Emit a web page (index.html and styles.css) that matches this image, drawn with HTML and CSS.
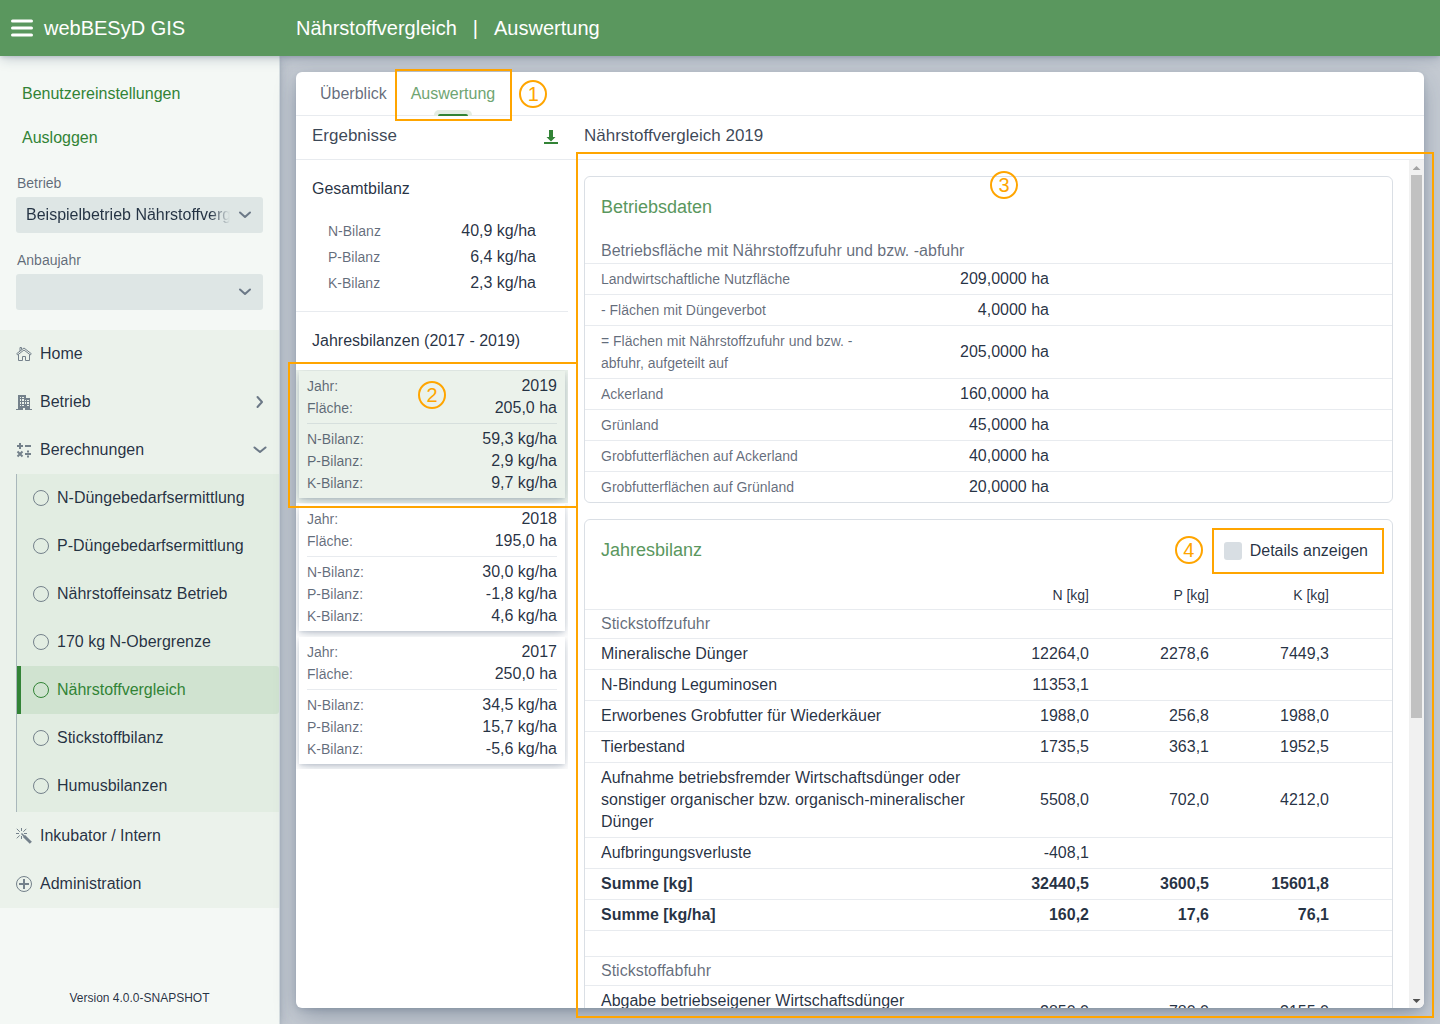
FILE: index.html
```html
<!DOCTYPE html>
<html lang="de">
<head>
    <meta charset="UTF-8">
    <meta name="viewport" content="width=device-width, initial-scale=1.0">
    <title>webBESyD GIS</title>
    <link rel="stylesheet" href="styles.css">
</head>
<body>

    <header class="navbar">
        <div class="brand">
            <button class="menu-toggle" aria-label="Menü">
                <svg width="22" height="18" viewBox="0 0 22 18"><path d="M1.500 2h19M1.500 9h19M1.500 16h19" stroke="#fff" stroke-width="3" stroke-linecap="round"/></svg>
            </button>
            <span>webBESyD GIS</span>
        </div>
        <h1 class="view-title"><span>Nährstoffvergleich</span><span>|</span><span>Auswertung</span></h1>
    </header>

    <div class="app">
        <aside class="drawer">
            <div class="user-links">
                <a href="#">Benutzereinstellungen</a>
                <a href="#">Ausloggen</a>
            </div>

            <div class="field">
                <label for="betrieb">Betrieb</label>
                <div class="select-box">
                    <select id="betrieb">
                        <option>Beispielbetrieb Nährstoffvergleich</option>
                    </select>
                    <svg class="chevron" width="14" height="8" viewBox="0 0 14 8"><path d="M2 1.5l5 4.5 5-4.5"/></svg>
                </div>
            </div>
            <div class="field">
                <label for="anbaujahr">Anbaujahr</label>
                <div class="select-box">
                    <select id="anbaujahr">
                        <option></option>
                    </select>
                    <svg class="chevron" width="14" height="8" viewBox="0 0 14 8"><path d="M2 1.5l5 4.5 5-4.5"/></svg>
                </div>
            </div>

            <nav class="menu">
                <a href="#" class="menu-item">
                    <svg class="icon" viewBox="0 0 16 16"><g fill="none" stroke="currentColor"><path d="M.7 7.7L8 2l7.300 5.700-1 1.200L8 4 1.700 8.900zM4 5V1.500h1.500V3.500M2.500 8.500v6h4v-4h3v4h4v-6"/></g></svg>
                    Home
                </a>
                <a href="#" class="menu-item">
                    <svg class="icon" viewBox="0 0 16 16"><path fill="currentColor" fill-rule="evenodd" d="M0 15h2V1h8v3h4v11h2v1H9v-2H7v2H0zM4 3v1h1V3zM6 3v1h2V3zM9 3v1h0V3zM4 5v2h1V5zM6 5v2h2V5zM9 6v1h1V6zM11 6v1h2V6zM4 8v2h1V8zM6 8v2h2V8zM9 8v2h1V8zM11 8v2h2V8zM4 11v1h1v-1zM6 11v1h2v-1zM11 11v1h2v-1z"/></svg>
                    Betrieb
                    <svg class="chevron" width="8" height="14" viewBox="0 0 8 14"><path d="M1.500 2L6 7l-4.500 5"/></svg>
                </a>
                <a href="#" class="menu-item">
                    <svg class="icon" viewBox="0 0 16 16"><g fill="none" stroke="currentColor" stroke-width="2"><path d="M1 4h6M4 1v6M9 4h6M1.500 9.500l5 5M6.500 9.500l-5 5M9 12h6"/></g><path fill="currentColor" d="M11 8.500h2v2h-2zM11 13.500h2v2h-2z"/></svg>
                    Berechnungen
                    <svg class="chevron" width="14" height="8" viewBox="0 0 14 8"><path d="M1.500 1.500L7 6l5.500-4.500"/></svg>
                </a>
                <div class="submenu">
                    <a href="#" class="menu-item"><svg class="icon" viewBox="0 0 16 16"><circle cx="8" cy="8" r="7.500" fill="none" stroke="currentColor"/></svg>N-Düngebedarfsermittlung</a>
                    <a href="#" class="menu-item"><svg class="icon" viewBox="0 0 16 16"><circle cx="8" cy="8" r="7.500" fill="none" stroke="currentColor"/></svg>P-Düngebedarfsermittlung</a>
                    <a href="#" class="menu-item"><svg class="icon" viewBox="0 0 16 16"><circle cx="8" cy="8" r="7.500" fill="none" stroke="currentColor"/></svg>Nährstoffeinsatz Betrieb</a>
                    <a href="#" class="menu-item"><svg class="icon" viewBox="0 0 16 16"><circle cx="8" cy="8" r="7.500" fill="none" stroke="currentColor"/></svg>170 kg N-Obergrenze</a>
                    <a href="#" class="menu-item active"><svg class="icon" viewBox="0 0 16 16"><circle cx="8" cy="8" r="7.500" fill="none" stroke="currentColor"/></svg>Nährstoffvergleich</a>
                    <a href="#" class="menu-item"><svg class="icon" viewBox="0 0 16 16"><circle cx="8" cy="8" r="7.500" fill="none" stroke="currentColor"/></svg>Stickstoffbilanz</a>
                    <a href="#" class="menu-item"><svg class="icon" viewBox="0 0 16 16"><circle cx="8" cy="8" r="7.500" fill="none" stroke="currentColor"/></svg>Humusbilanzen</a>
                </div>
                <a href="#" class="menu-item">
                    <svg class="icon" viewBox="0 0 16 16"><g fill="none" stroke="currentColor"><path d="M5.500 0v3M5.500 8v3M0 5.500h3M8 5.500h3M.8 .8l3 3M10.300 .8L7.300 3.800M.8 10.300l3-3"/><path stroke-width="1.500" d="M5.500 5.500L9 9"/><path stroke-width="3" d="M8 8l6.800 6.800"/></g></svg>
                    Inkubator / Intern
                </a>
                <a href="#" class="menu-item">
                    <svg class="icon" viewBox="0 0 16 16"><g fill="none" stroke="currentColor"><circle cx="8" cy="8" r="7.500"/><path stroke-width="2" d="M3 8h10M8 3v10"/></g></svg>
                    Administration
                </a>
            </nav>

            <div class="version">Version 4.0.0-SNAPSHOT</div>
        </aside>

        <main class="content">
            <div class="panel">
                <nav class="tabs">
                    <a href="#" class="tab">Überblick</a>
                    <a href="#" class="tab selected">Auswertung<span class="mark mark-tab"></span><span class="mark-no no-tab">1</span></a>
                </nav>

                <div class="columns">
                    <section class="results">
                        <div class="col-header">
                            <h2>Ergebnisse</h2>
                            <button class="download" aria-label="Herunterladen">
                                <svg width="14" height="14" viewBox="0 0 14 14"><path fill="currentColor" d="M5 0h4v7h2.500L7 11.500 2.500 7H5zM0 12h14v2H0z"/></svg>
                            </button>
                        </div>

                        <div class="total">
                            <h3>Gesamtbilanz</h3>
                            <dl>
                                <div class="pair"><dt>N-Bilanz</dt><dd>40,9 kg/ha</dd></div>
                                <div class="pair"><dt>P-Bilanz</dt><dd>6,4 kg/ha</dd></div>
                                <div class="pair"><dt>K-Bilanz</dt><dd>2,3 kg/ha</dd></div>
                            </dl>
                        </div>

                        <h3>Jahresbilanzen (2017 - 2019)</h3>
                        <ul class="years">
                            <li class="selected">
                                <div class="year-clip">
                                    <dl class="year">
                                        <div class="pair"><dt>Jahr:</dt><dd>2019</dd></div>
                                        <div class="pair"><dt>Fläche:</dt><dd>205,0 ha</dd></div>
                                        <div class="pair first"><dt>N-Bilanz:</dt><dd>59,3 kg/ha</dd></div>
                                        <div class="pair"><dt>P-Bilanz:</dt><dd>2,9 kg/ha</dd></div>
                                        <div class="pair"><dt>K-Bilanz:</dt><dd>9,7 kg/ha</dd></div>
                                    </dl>
                                </div>
                                <span class="mark mark-year"></span><span class="mark-no no-year">2</span>
                            </li>
                            <li>
                                <div class="year-clip">
                                    <dl class="year">
                                        <div class="pair"><dt>Jahr:</dt><dd>2018</dd></div>
                                        <div class="pair"><dt>Fläche:</dt><dd>195,0 ha</dd></div>
                                        <div class="pair first"><dt>N-Bilanz:</dt><dd>30,0 kg/ha</dd></div>
                                        <div class="pair"><dt>P-Bilanz:</dt><dd>-1,8 kg/ha</dd></div>
                                        <div class="pair"><dt>K-Bilanz:</dt><dd>4,6 kg/ha</dd></div>
                                    </dl>
                                </div>
                            </li>
                            <li>
                                <div class="year-clip">
                                    <dl class="year">
                                        <div class="pair"><dt>Jahr:</dt><dd>2017</dd></div>
                                        <div class="pair"><dt>Fläche:</dt><dd>250,0 ha</dd></div>
                                        <div class="pair first"><dt>N-Bilanz:</dt><dd>34,5 kg/ha</dd></div>
                                        <div class="pair"><dt>P-Bilanz:</dt><dd>15,7 kg/ha</dd></div>
                                        <div class="pair"><dt>K-Bilanz:</dt><dd>-5,6 kg/ha</dd></div>
                                    </dl>
                                </div>
                            </li>
                        </ul>
                    </section>

                    <section class="details">
                        <div class="col-header">
                            <h2>Nährstoffvergleich 2019</h2>
                        </div>

                        <div class="scroll-area">
                            <div class="scroller">
                                <article class="card">
                                    <div class="card-header">
                                        <h3>Betriebsdaten</h3>
                                    </div>
                                    <table class="farm">
                                        <caption>Betriebsfläche mit Nährstoffzufuhr und bzw. -abfuhr</caption>
                                        <colgroup><col class="col-label"><col class="col-area"><col></colgroup>
                                        <tr><th>Landwirtschaftliche Nutzfläche</th><td>209,0000 ha</td><td></td></tr>
                                        <tr><th>- Flächen mit Düngeverbot</th><td>4,0000 ha</td><td></td></tr>
                                        <tr><th>= Flächen mit Nährstoffzufuhr und bzw. -abfuhr, aufgeteilt auf</th><td>205,0000 ha</td><td></td></tr>
                                        <tr><th>Ackerland</th><td>160,0000 ha</td><td></td></tr>
                                        <tr><th>Grünland</th><td>45,0000 ha</td><td></td></tr>
                                        <tr><th>Grobfutterflächen auf Ackerland</th><td>40,0000 ha</td><td></td></tr>
                                        <tr><th>Grobfutterflächen auf Grünland</th><td>20,0000 ha</td><td></td></tr>
                                    </table>
                                </article>

                                <article class="card">
                                    <div class="card-header">
                                        <h3>Jahresbilanz</h3>
                                        <label class="show-details">
                                            <input type="checkbox">
                                            Details anzeigen
                                            <span class="mark mark-check"></span><span class="mark-no no-check">4</span>
                                        </label>
                                    </div>
                                    <table class="balance">
                                        <colgroup><col class="col-name"><col class="col-num"><col class="col-num"><col class="col-num"><col></colgroup>
                                        <thead>
                                            <tr><th></th><th>N [kg]</th><th>P [kg]</th><th>K [kg]</th><th></th></tr>
                                        </thead>
                                        <tbody>
                                            <tr class="group"><th colspan="5">Stickstoffzufuhr</th></tr>
                                            <tr><th>Mineralische Dünger</th><td>12264,0</td><td>2278,6</td><td>7449,3</td><td></td></tr>
                                            <tr><th>N-Bindung Leguminosen</th><td>11353,1</td><td></td><td></td><td></td></tr>
                                            <tr><th>Erworbenes Grobfutter für Wiederkäuer</th><td>1988,0</td><td>256,8</td><td>1988,0</td><td></td></tr>
                                            <tr><th>Tierbestand</th><td>1735,5</td><td>363,1</td><td>1952,5</td><td></td></tr>
                                            <tr><th>Aufnahme betriebsfremder Wirtschaftsdünger oder sonstiger organischer bzw. organisch-mineralischer Dünger</th><td>5508,0</td><td>702,0</td><td>4212,0</td><td></td></tr>
                                            <tr><th>Aufbringungsverluste</th><td>-408,1</td><td></td><td></td><td></td></tr>
                                            <tr class="sum"><th>Summe [kg]</th><td>32440,5</td><td>3600,5</td><td>15601,8</td><td></td></tr>
                                            <tr class="sum"><th>Summe [kg/ha]</th><td>160,2</td><td>17,6</td><td>76,1</td><td></td></tr>
                                            <tr class="spacer"><td colspan="5"></td></tr>
                                            <tr class="group"><th colspan="5">Stickstoffabfuhr</th></tr>
                                            <tr><th>Abgabe betriebseigener Wirtschaftsdünger oder&nbsp;sonstiger organischer Dünger</th><td>2850,0</td><td>780,0</td><td>3155,0</td><td></td></tr>
                                        </tbody>
                                    </table>
                                </article>
                            </div>
                            <div class="scrollbar" aria-hidden="true">
                                <span class="arrow up"></span>
                                <span class="thumb"></span>
                                <span class="arrow down"></span>
                            </div>
                        </div>
                        <span class="mark mark-details"></span><span class="mark-no no-details">3</span>
                    </section>
                </div>
            </div>
        </main>
    </div>

</body>
</html>
```
FILE: styles.css
```css
:root {
    --green: #328336;
    --text: hsla(214, 40%, 16%, 0.94);
    --secondary: hsla(214, 42%, 18%, 0.69);
    --line: hsla(214, 57%, 24%, 0.1);
    --shadow-s: 0 2px 4px -1px hsla(214, 53%, 23%, 0.16), 0 3px 12px -1px hsla(214, 50%, 22%, 0.26);
    --shadow-m: 0 2px 6px -1px hsla(214, 53%, 23%, 0.16), 0 8px 24px -4px hsla(214, 47%, 21%, 0.38);
}

* {
    box-sizing: border-box;
}

body {
    margin: 0;
    height: 100vh;
    display: flex;
    flex-direction: column;
    overflow: hidden;
    font-family: "Liberation Sans", Arial, sans-serif;
    font-size: 16px;
    line-height: 22px;
    color: var(--text);
    background: #c4cad2;
}

h1, h2, h3, dl, dd, ul {
    margin: 0;
    padding: 0;
    font-weight: normal;
}

a {
    text-decoration: none;
    color: inherit;
}

button {
    border: none;
    background: none;
    padding: 0;
    cursor: pointer;
}

svg {
    display: block;
}

/* Kopfzeile */
.navbar {
    display: flex;
    align-items: center;
    flex: none;
    height: 56px;
    background: #5a975e;
    color: #fff;
    font-size: 20px;
    box-shadow: var(--shadow-s);
    position: relative;
    z-index: 2;
}

.brand {
    display: flex;
    align-items: center;
    gap: 11px;
    width: 296px;
    padding-left: 11px;
}

.view-title {
    display: flex;
    gap: 16px;
    font-size: 20px;
}

/* Seitenleiste */
.app {
    display: flex;
    flex: 1;
    min-height: 0;
}

.drawer {
    display: flex;
    flex-direction: column;
    flex: none;
    width: 280px;
    background: #f4f8f5;
    border-right: 1px solid #d5dde0;
    box-shadow: var(--shadow-s);
}

.user-links {
    display: flex;
    flex-direction: column;
    gap: 8px;
    padding: 20px 22px 16px;
    line-height: 36px;
    color: var(--green);
}

.field {
    padding: 0 16px;
    margin-bottom: 16px;
}

.field label {
    display: block;
    padding: 0 1px 3px;
    font-size: 14px;
    color: var(--secondary);
}

.select-box {
    display: flex;
    align-items: center;
    height: 36px;
    padding-right: 11px;
    border-radius: 3px;
    background: #dee6e5;
}

.select-box select {
    appearance: none;
    flex: 1;
    min-width: 0;
    height: 36px;
    margin-right: 8px;
    padding: 0 0 0 10px;
    border: none;
    background: none;
    font: inherit;
    color: var(--text);
    -webkit-mask-image: linear-gradient(to left, transparent, #000 20px);
    mask-image: linear-gradient(to left, transparent, #000 20px);
}

.chevron path {
    fill: none;
    stroke: #6c7987;
    stroke-width: 2;
    stroke-linecap: round;
    stroke-linejoin: round;
}

.menu {
    margin-top: 4px;
    background: #ebf2eb;
}

.menu-item {
    display: flex;
    align-items: center;
    gap: 8px;
    height: 48px;
    padding: 0 12px 0 16px;
}

.menu-item .icon {
    width: 16px;
    height: 16px;
    color: #74818b;
}

.menu-item .chevron {
    margin-left: auto;
}

.menu-item .chevron[width="8"] {
    margin-right: 3px;
}

.submenu {
    margin-left: 16px;
    padding-bottom: 2px;
    border-left: 1px solid #a9b7bb;
    background: #e2ede2;
}

.menu-item.active {
    padding-left: 12px;
    border-left: 4px solid var(--green);
    border-radius: 0 3px 3px 0;
    background: #d0e3d0;
    color: var(--green);
}

.menu-item.active .icon {
    color: var(--green);
}

.version {
    margin-top: auto;
    padding-bottom: 15px;
    text-align: center;
    font-size: 12px;
}

/* Inhalt */
.content {
    display: flex;
    flex: 1;
    min-width: 0;
    padding: 16px;
}

.panel {
    display: flex;
    flex-direction: column;
    flex: 1;
    min-width: 0;
    border-radius: 6px;
    background: #fff;
    box-shadow: var(--shadow-m);
}

.tabs {
    display: flex;
    flex: none;
    height: 44px;
    padding: 0 12px;
    border-bottom: 1px solid var(--line);
}

.tab {
    position: relative;
    padding: 0 12px;
    line-height: 44px;
    color: var(--secondary);
}

.tab.selected {
    color: #6fa572;
}

.tab.selected::before {
    content: "";
    position: absolute;
    bottom: -1px;
    left: 50%;
    width: 38px;
    height: 6px;
    margin-left: -19px;
    border-radius: 5px 5px 0 0;
    background: #e3ede4;
}

.tab.selected::after {
    content: "";
    position: absolute;
    bottom: -1px;
    left: 50%;
    width: 30px;
    height: 2px;
    margin-left: -15px;
    border-radius: 2px 2px 0 0;
    background: var(--green);
}

.columns {
    display: flex;
    flex: 1;
    min-height: 0;
}

.results {
    flex: none;
    width: 272px;
}

.details {
    display: flex;
    flex-direction: column;
    flex: 1;
    min-width: 0;
    position: relative;
}

.col-header {
    display: flex;
    justify-content: space-between;
    flex: none;
    height: 44px;
    padding: 9px 10px 0 16px;
    border-bottom: 1px solid var(--line);
}

.col-header h2 {
    font-size: 17px;
    color: hsla(214, 40%, 16%, 0.85);
}

.download {
    height: 24px;
    color: var(--green);
}

.results h3 {
    height: 58px;
    padding: 18px 16px 0;
    font-size: 16px;
}

.pair {
    display: flex;
    justify-content: space-between;
}

.pair dt {
    font-size: 14px;
    color: var(--secondary);
}

.total {
    padding-bottom: 15px;
    border-bottom: 1px solid var(--line);
}

.total dl {
    padding: 0 32px;
    line-height: 26px;
}

.years {
    list-style: none;
}

.years li {
    position: relative;
}

.year-clip {
    overflow: hidden;
    padding: 1px 3px 5px;
}

.year {
    padding: 4px 8px;
    background: #fff;
    box-shadow: var(--shadow-s);
}

.pair.first {
    margin-top: 4px;
    padding-top: 4px;
    border-top: 1px solid var(--line);
}

.years .selected .year-clip,
.years .selected .year {
    background: #ebf2eb;
}

.scroll-area {
    display: flex;
    flex: 1;
    min-height: 0;
}

.scroller {
    flex: 1;
    min-width: 0;
    padding: 16px;
    overflow-y: auto;
    scrollbar-width: none;
}

.scrollbar {
    display: flex;
    flex-direction: column;
    align-items: center;
    flex: none;
    width: 15px;
    border-radius: 0 0 6px 0;
    background: #f1f1f1;
}

.arrow {
    width: 8px;
    height: 4px;
    margin: 6px 0 5px;
}

.arrow.up {
    background: #a3a3a3;
    clip-path: polygon(50% 0, 100% 100%, 0 100%);
}

.arrow.down {
    margin-top: auto;
    background: #505050;
    clip-path: polygon(0 0, 100% 0, 50% 100%);
}

.thumb {
    width: 11px;
    height: 64%;
    background: #c1c1c1;
}

/* Karten mit Tabellen */
.card {
    margin-bottom: 16px;
    border: 1px solid hsla(214, 57%, 24%, 0.16);
    border-radius: 6px;
}

.card-header {
    display: flex;
    justify-content: space-between;
    align-items: center;
    height: 60px;
    padding: 0 24px 0 16px;
}

.card-header h3 {
    font-size: 18px;
    color: #5a975e;
}

.show-details {
    position: relative;
    display: flex;
    align-items: center;
    gap: 8px;
    margin-top: 2px;
}

.show-details input {
    appearance: none;
    width: 18px;
    height: 18px;
    margin: 0;
    border-radius: 3px;
    background: #d8dee3;
}

table {
    width: 100%;
    table-layout: fixed;
    border-collapse: separate;
    border-spacing: 0;
}

caption {
    height: 26px;
    padding: 3px 16px 1px;
    text-align: left;
    color: var(--secondary);
}

th, td {
    padding: 4px 0;
    border-top: 1px solid var(--line);
    font-weight: normal;
    text-align: right;
}

th:first-child {
    padding-left: 16px;
    text-align: left;
}

.farm th {
    font-size: 14px;
    color: var(--secondary);
}

.col-label {
    width: 288px;
}

.col-area {
    width: 176px;
}

.col-name {
    width: 384px;
}

.col-num {
    width: 120px;
}

.balance thead th {
    padding-bottom: 3px;
    border-top: none;
    font-size: 14px;
}

.group th {
    padding: 3px 16px;
    color: var(--secondary);
}

.sum th, .sum td {
    font-weight: bold;
}

.spacer td {
    height: 26px;
    padding: 0;
}

/* Markierungen der Anleitung */
.mark {
    position: absolute;
    z-index: 1;
    border: 2px solid orange;
    pointer-events: none;
}

.mark-no {
    position: absolute;
    z-index: 1;
    width: 28px;
    height: 28px;
    border: 2px solid orange;
    border-radius: 50%;
    font-size: 20px;
    line-height: 24px;
    text-align: center;
    color: orange;
}

.mark-tab {
    inset: -3px -5px -6px -4px;
}

.no-tab {
    top: 8px;
    right: -40px;
}

.mark-year {
    inset: -8px -10px -5px -8px;
}

.no-year {
    top: 11px;
    left: 122px;
}

.mark-details {
    inset: 36px -10px -10px 8px;
}

.no-details {
    top: 55px;
    left: 50%;
    margin-left: -6px;
}

.mark-check {
    inset: -12px -16px -12px -12px;
}

.no-check {
    top: -4px;
    left: -49px;
}
```
